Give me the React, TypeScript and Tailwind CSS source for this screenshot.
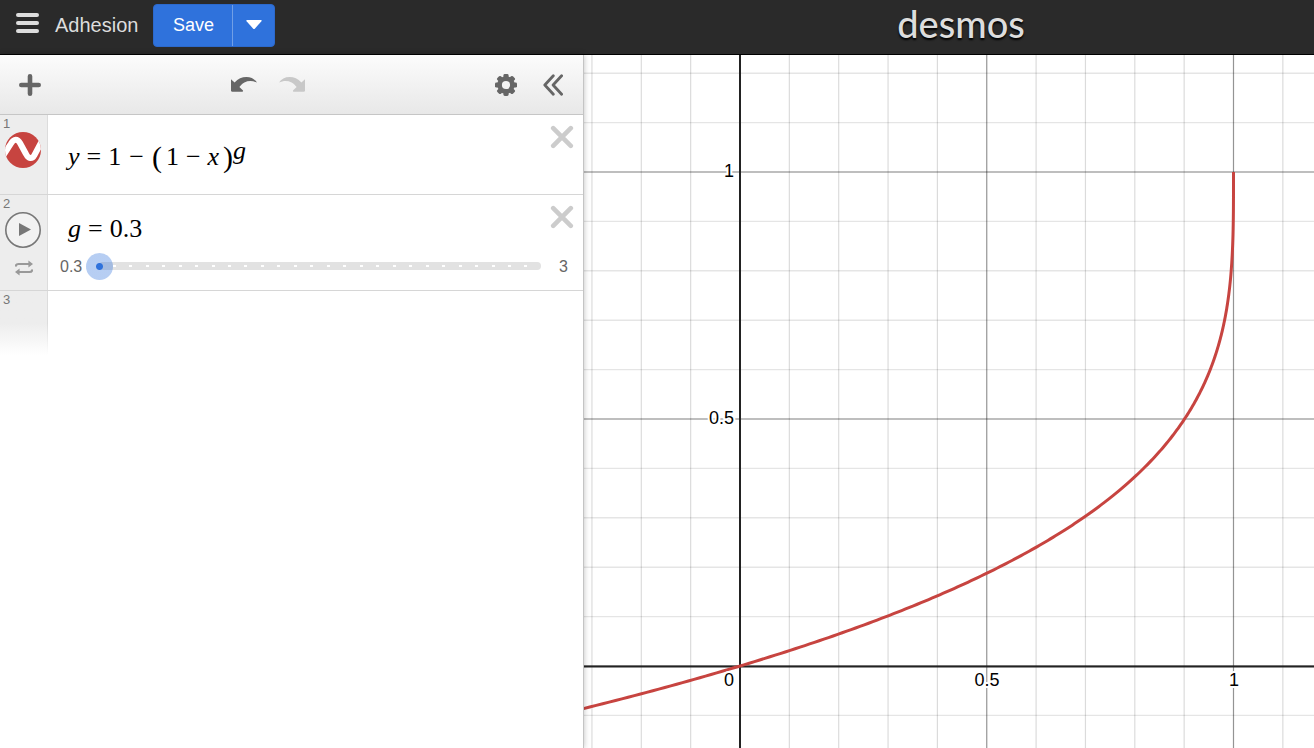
import { useState, type ReactNode } from 'react'

const UNIT_X = 493.5
const UNIT_Y = 494
const ORIGIN_X = 156
const ORIGIN_Y = 611

const SERIF = "font-['Liberation_Serif',serif]"

function range(from: number, to: number) {
  return Array.from({ length: to - from + 1 }, (_, i) => from + i)
}

// y = 1 - (1 - x)^g, drawn for x <= 1
function curvePath(g: number) {
  const points: string[] = []
  for (let i = 0; i <= 400; i++) {
    // samples get denser close to x = 1, where the slope is infinite
    const t = i / 400
    const x = 1 - 1.4 * Math.pow(1 - t, 4)
    const y = 1 - Math.pow(Math.max(0, 1 - x), g)
    points.push(`${(ORIGIN_X + x * UNIT_X).toFixed(2)} ${(ORIGIN_Y - y * UNIT_Y).toFixed(2)}`)
  }
  return `M${points.join('L')}`
}

function AxisLabel({ x, y, anchor, children }: { x: number; y: number; anchor: 'middle' | 'end'; children: ReactNode }) {
  return (
    <text x={x} y={y} textAnchor={anchor} fontSize={18} fill="#000" stroke="#fff" strokeWidth={4} strokeLinejoin="round" paintOrder="stroke">
      {children}
    </text>
  )
}

function Graph({ g }: { g: number }) {
  return (
    <svg className="block h-full w-full" role="img" aria-label="Graph">
      {range(-3, 60).map((i) => {
        const x = ORIGIN_X + (i * UNIT_X) / 10
        const major = i % 5 === 0
        return <line key={i} x1={x} x2={x} y1={0} y2="100%" stroke="#000" strokeOpacity={major ? 0.42 : 0.14} strokeWidth={1.2} />
      })}
      {range(-30, 12).map((i) => {
        const y = ORIGIN_Y - (i * UNIT_Y) / 10
        const major = i % 5 === 0
        return <line key={i} x1={0} x2="100%" y1={y} y2={y} stroke="#000" strokeOpacity={major ? 0.34 : 0.1} strokeWidth={1.4} />
      })}
      <line x1={ORIGIN_X} x2={ORIGIN_X} y1={0} y2="100%" stroke="#222" strokeWidth={2} />
      <line x1={0} x2="100%" y1={ORIGIN_Y + 0.5} y2={ORIGIN_Y + 0.5} stroke="#222" strokeWidth={1.8} />
      <path d={curvePath(g)} fill="none" stroke="#c74440" strokeWidth={3} strokeLinejoin="round" />
      <AxisLabel x={150} y={122} anchor="end">1</AxisLabel>
      <AxisLabel x={150} y={369} anchor="end">0.5</AxisLabel>
      <AxisLabel x={150} y={631} anchor="end">0</AxisLabel>
      <AxisLabel x={403} y={631} anchor="middle">0.5</AxisLabel>
      <AxisLabel x={650} y={631} anchor="middle">1</AxisLabel>
    </svg>
  )
}

function UndoIcon({ className }: { className: string }) {
  return (
    <svg viewBox="0 0 26 16" width={26} height={16} className={className} fill="currentColor" aria-hidden="true">
      <path d="M0 2.2 L3.6 5.4 C7 1.6 11 0 15.4 0 C20 0 23.8 2 26 5.6 C22 3.6 17.4 3.4 13.4 5.4 C11 6.6 9.4 8.4 8.4 10 L12 13.4 C12.2 14.2 11.8 14.8 11 14.8 L1.2 14.8 C.4 14.8 0 14.4 0 13.6 Z" />
    </svg>
  )
}

function GearIcon() {
  return (
    <svg viewBox="-11 -11 22 22" width={22} height={22} aria-hidden="true">
      {range(0, 7).map((i) => (
        <rect key={i} x={-2.6} y={-11} width={5.2} height={6} rx={1.4} fill="#666" transform={`rotate(${i * 45})`} />
      ))}
      <circle r={6.4} fill="none" stroke="#666" strokeWidth={4.6} />
    </svg>
  )
}

function ClearButton() {
  return (
    <button aria-label="Delete expression" className="absolute top-2.5 right-[9px] text-[#ccc] hover:text-[#999]">
      <svg viewBox="0 0 24 24" width={24} height={24} stroke="currentColor" strokeWidth={4.6} strokeLinecap="round" aria-hidden="true">
        <path d="M3.2 3.2L20.8 20.8M20.8 3.2L3.2 20.8" />
      </svg>
    </button>
  )
}

function Row({ index, icon, children, className }: { index: number; icon: ReactNode; children: ReactNode; className: string }) {
  return (
    <li className={`relative flex border-b border-[#d6d6d6] ${className}`}>
      <div className="flex w-12 shrink-0 flex-col items-start border-r border-[#dcdcdc] bg-[#ededed]">
        <span className="pl-[3px] text-[13px] leading-[17px] text-[#777]">{index}</span>
        {icon}
      </div>
      <div className="min-w-0 flex-1">{children}</div>
      <ClearButton />
    </li>
  )
}

export default function App() {
  const [g, setG] = useState(0.3)

  return (
    <div className="flex h-screen flex-col overflow-hidden bg-white font-['Liberation_Sans',Arial,sans-serif]">
      <header className="flex h-[55px] shrink-0 items-center border-b border-black bg-[#2a2a2a] pb-1">
        <div className="flex w-[584px] shrink-0 items-center pl-4">
          <button aria-label="Open graphs" className="-mt-1 mr-4 flex flex-col gap-1">
            <span className="h-1 w-[23px] rounded-sm bg-[#ddd]" />
            <span className="h-1 w-[23px] rounded-sm bg-[#ddd]" />
            <span className="h-1 w-[23px] rounded-sm bg-[#ddd]" />
          </button>
          <h1 className="text-xl text-[#ddd]">Adhesion</h1>
          <div className="ml-[15px] flex h-[43px] overflow-hidden rounded border border-[#2c69cc] bg-[#2f72dc] text-lg text-white">
            <button className="w-[78px]">Save</button>
            <button aria-label="More save options" className="flex w-[42px] items-center justify-center border-l border-[#719fe6]">
              <svg viewBox="0 0 16 10" width={16} height={10} fill="currentColor" aria-hidden="true">
                <path d="M1 0H15Q16.2 .2 15.4 1.2L9 8.5Q8 9.5 7 8.5L.6 1.2Q-.2 .2 1 0Z" />
              </svg>
            </button>
          </div>
        </div>
        <div className="flex flex-1 justify-center pb-1 pl-6">
          <a
            href="#"
            className="font-['Lato',sans-serif] text-[38px] leading-[46px] font-medium text-[#ddd] [text-shadow:0_2px_2px_#000]"
          >
            desmos
          </a>
        </div>
      </header>

      <div className="flex min-h-0 flex-1">
        <aside className="z-10 flex w-[584px] shrink-0 flex-col border-r border-[#c4c4c4] bg-white shadow-[0_0_6px_rgba(0,0,0,0.25)]">
          <div className="flex h-[60px] shrink-0 items-center border-b border-[#c6c6c6] bg-linear-to-b from-[#fcfcfc] to-[#e8e8e8] pr-5 pl-[19px] text-[#666]">
            <button aria-label="Add item">
              <svg viewBox="0 0 22 22" width={22} height={22} stroke="currentColor" strokeWidth={4.6} strokeLinecap="round" aria-hidden="true">
                <path d="M11 2.3V19.7M2.3 11H19.7" />
              </svg>
            </button>
            <div className="flex flex-1 justify-center gap-[22px]">
              <button aria-label="Undo"><UndoIcon className="text-[#666]" /></button>
              <button aria-label="Redo" disabled><UndoIcon className="-scale-x-100 text-[#c8c8c8]" /></button>
            </div>
            <button aria-label="Graph settings" className="mr-[26px]"><GearIcon /></button>
            <button aria-label="Hide list">
              <svg viewBox="0 0 20 22" width={20} height={22} fill="none" stroke="currentColor" strokeWidth={2.8} strokeLinecap="round" strokeLinejoin="round" aria-hidden="true">
                <path d="M10.3 1.8L1.8 11L10.3 20.2M18.6 1.8L10.1 11L18.6 20.2" />
              </svg>
            </button>
          </div>

          <ol>
            <Row
              index={1}
              className="h-20"
              icon={
                <button aria-label="Hide graph" className="ml-[5px]">
                  <svg viewBox="0 0 36 36" width={36} height={36} aria-hidden="true">
                    <clipPath id="dot"><circle cx={18} cy={18} r={18} /></clipPath>
                    <circle cx={18} cy={18} r={18} fill="#c74440" />
                    <path
                      clipPath="url(#dot)"
                      d="M-2 24L6 11.5C9 6.5 12.5 6.5 15 11L21 22C23.500 27 27 27.500 29.500 23L38 7"
                      fill="none"
                      stroke="#fff"
                      strokeWidth={6}
                    />
                  </svg>
                </button>
              }
            >
              <div className={`${SERIF} flex items-center pt-6 pl-5 text-[26px] leading-9 text-black`}>
                <i>y</i>
                <span className="mx-[7px]">=</span>
                <span>1</span>
                <span className="mx-2">−</span>
                <span className="mr-1 text-[30px]">(</span>
                <span>1</span>
                <span className="mx-[7px]">−</span>
                <i>x</i>
                <span className="ml-1 text-[30px]">)</span>
                <i className="pb-3 leading-6">g</i>
              </div>
            </Row>

            <Row
              index={2}
              className="h-24"
              icon={
                <>
                  <button aria-label="Play" className="ml-[5px]">
                    <svg viewBox="0 0 36 36" width={36} height={36} aria-hidden="true">
                      <circle cx={18} cy={18} r={17.2} fill="#f2f2f2" stroke="#777" strokeWidth={1.6} />
                      <path d="M14 11L26 17.5L14 24Z" fill="#777" />
                    </svg>
                  </button>
                  <button aria-label="Animation mode" className="mt-3 ml-[15px]">
                    <svg viewBox="0 0 18 16" width={18} height={16} fill="none" stroke="#999" strokeWidth={2} aria-hidden="true">
                      <path d="M.6 6.6Q.8 4 3.4 4H15M17.4 9.400Q17.200 12 14.600 12H3" />
                      <path d="M13.4 .4L18 4L13.4 7.600ZM4.600 8.400L0 12L4.600 15.600Z" fill="#999" stroke="none" />
                    </svg>
                  </button>
                </>
              }
            >
              <div className={`${SERIF} flex pt-4 pl-5 text-[26px] leading-9 text-black`}>
                <i>g</i>
                <span className="mx-[7px]">=</span>
                <span>{g}</span>
              </div>
              <div className="flex items-center pt-1.5 pr-[15px] pl-3 text-base text-[#666]">
                <span className="leading-[27px]">0.3</span>
                <div className="relative mr-[5px] ml-1 h-[27px] flex-1">
                  <div className="absolute top-[9px] right-[13px] left-[13px] flex h-2 items-center justify-evenly rounded bg-[#e2e2e2]">
                    {range(1, 26).map((i) => <span key={i} className="h-0.5 w-[3px] bg-white" />)}
                  </div>
                  <input
                    type="range"
                    aria-label="g"
                    min={0.3}
                    max={3}
                    step={0.1}
                    value={g}
                    onChange={(e) => setG(Number(e.target.value))}
                    className="relative block h-[27px] w-full cursor-pointer appearance-none bg-transparent [&::-webkit-slider-thumb]:size-[27px] [&::-webkit-slider-thumb]:appearance-none [&::-webkit-slider-thumb]:rounded-full [&::-webkit-slider-thumb]:bg-[radial-gradient(circle,#2f72dc_3px,rgba(47,114,220,0.35)_4px)]"
                  />
                </div>
                <span className="leading-[27px]">3</span>
              </div>
            </Row>

            <li className="flex h-16">
              <div className="w-[47px] bg-linear-to-b from-[#ededed] from-50% to-white">
                <span className="block pl-[3px] text-[13px] leading-[17px] text-[#777]">3</span>
              </div>
              <div className="w-px bg-linear-to-b from-[#dcdcdc] from-50% to-white" />
            </li>
          </ol>
        </aside>

        <main className="min-w-0 flex-1">
          <Graph g={g} />
        </main>
      </div>
    </div>
  )
}
